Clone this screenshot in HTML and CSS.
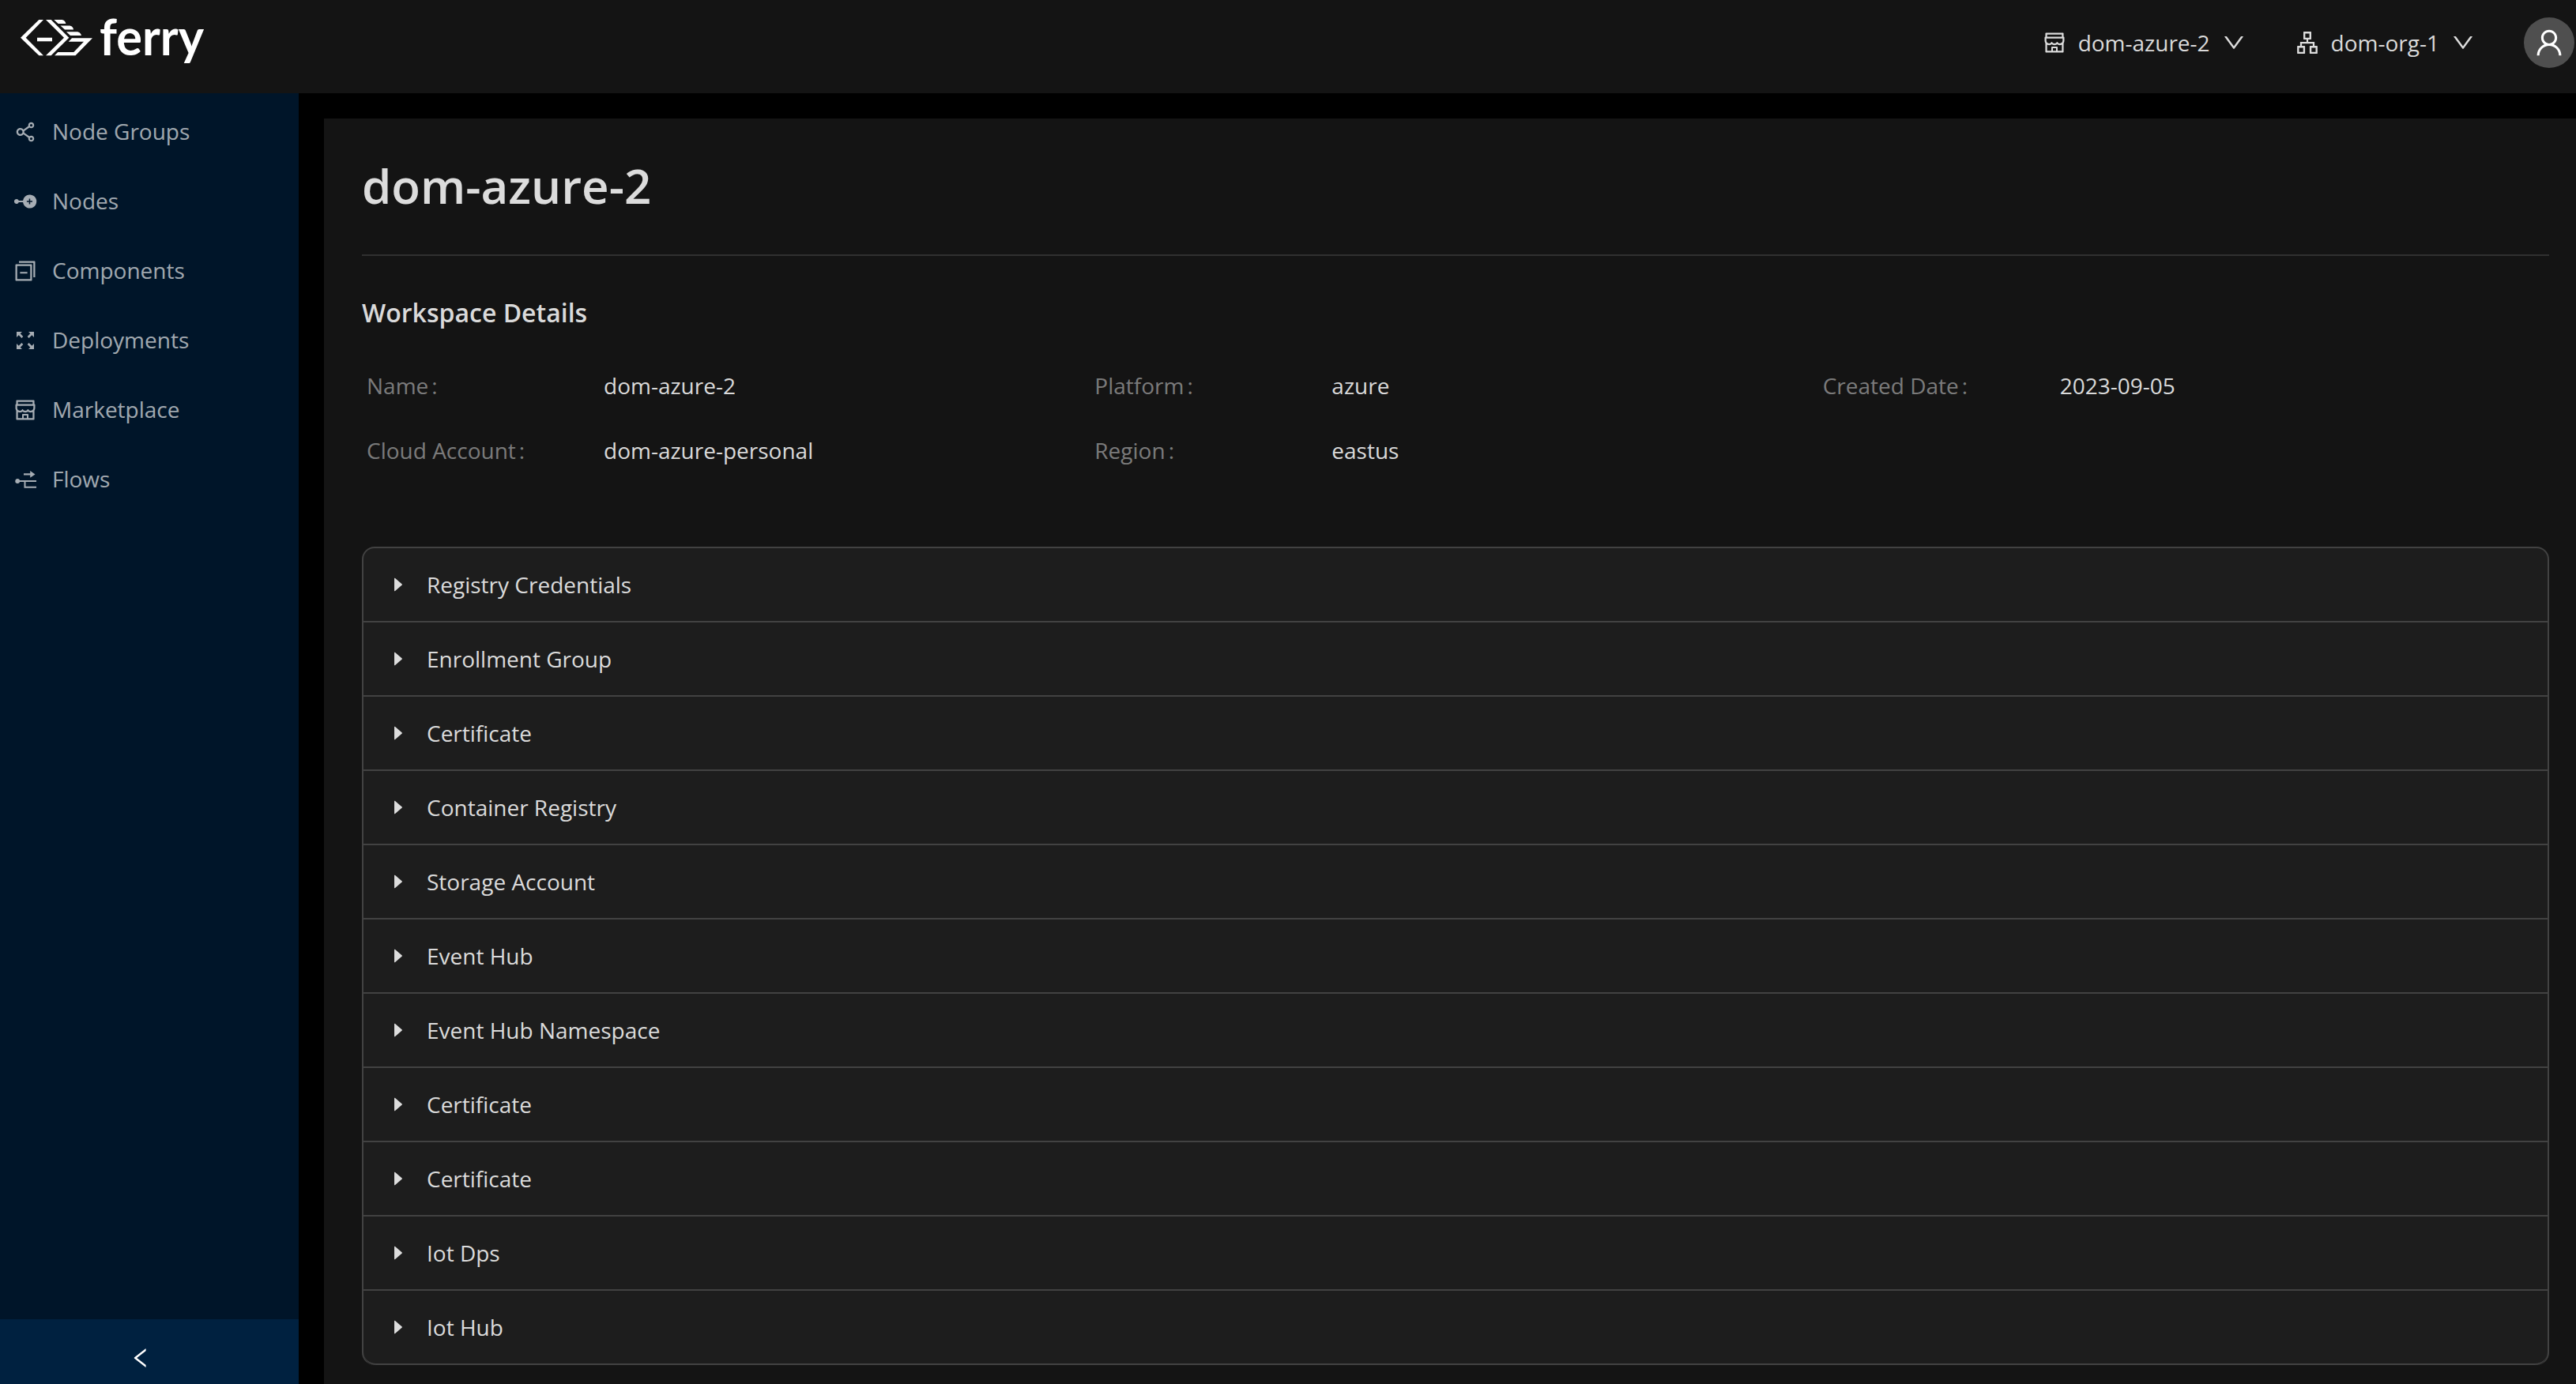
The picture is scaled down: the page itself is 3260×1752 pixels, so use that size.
FILE: index.html
```html
<!DOCTYPE html>
<html lang="en">
<head>
    <meta charset="UTF-8">
    <meta name="viewport" content="width=device-width, initial-scale=1.0">
    <title>ferry - dom-azure-2</title>
    <link rel="stylesheet" href="styles.css">
</head>
<body>
    <!-- shared icons -->
    <svg class="icon-defs" width="0" height="0">
        <symbol id="shop" viewBox="0 0 1024 1024">
            <path d="M882 272.1V144c0-17.7-14.3-32-32-32H174c-17.7 0-32 14.3-32 32v128.1c-16.7 1-30 14.9-30 31.9v131.7a177 177 0 0 0 14.4 70.4c4.3 10.2 9.6 19.8 15.6 28.9v345c0 17.6 14.3 32 32 32h676c17.7 0 32-14.3 32-32V535a175 175 0 0 0 15.6-28.9c9.5-22.3 14.4-46 14.4-70.4V304c0-17-13.3-30.9-30-31.9zM214 184h596v88H214v-88zm362 656.1H448V736h128v104.1zm234 0H640V704c0-17.7-14.3-32-32-32H416c-17.7 0-32 14.3-32 32v136.1H214V597.9c2.9 1.4 5.9 2.8 9 4 22.3 9.4 46 14.1 70.4 14.1s48-4.7 70.4-14.1c13.8-5.8 26.8-13.2 38.7-22.1.2-.1.4-.1.6 0a180.4 180.4 0 0 0 38.7 22.1c22.3 9.4 46 14.1 70.4 14.1 24.4 0 48-4.7 70.4-14.1 13.8-5.8 26.8-13.2 38.7-22.1.2-.1.4-.1.6 0a180.4 180.4 0 0 0 38.7 22.1c22.3 9.4 46 14.1 70.4 14.1 24.4 0 48-4.7 70.4-14.1 3-1.3 6-2.6 9-4v242.2zm30-404.4c0 59.8-49 108.3-109.3 108.3-40.8 0-76.4-22.1-95.2-54.9-2.9-5-8.1-8.1-13.9-8.1h-.6c-5.7 0-11 3.1-13.9 8.1A109.24 109.24 0 0 1 512 544c-40.7 0-76.2-22-95-54.7-3-5.1-8.4-8.3-14.3-8.3s-11.4 3.2-14.3 8.3a109.63 109.63 0 0 1-95.1 54.7C233 544 184 495.5 184 435.7v-91.2c0-.3.2-.5.5-.5h655c.3 0 .5.2.5.5v91.2z"/>
        </symbol>
        <symbol id="down" viewBox="0 0 1024 1024">
            <path d="M884 256h-75c-5.1 0-9.9 2.5-12.9 6.6L512 654.2 227.9 262.6c-3-4.1-7.8-6.6-12.9-6.6h-75c-6.5 0-10.3 7.4-6.5 12.7l352.6 486.1c12.8 17.6 39 17.6 51.7 0l352.6-486.1c3.9-5.3.1-12.7-6.4-12.7z"/>
        </symbol>
        <symbol id="caret" viewBox="0 0 1024 1024">
            <path d="M715.8 493.5L335 165.1c-14.2-12.2-35-1.2-35 18.5v656.8c0 19.7 20.8 30.7 35 18.5l380.8-328.4c10.9-9.4 10.9-27.6 0-37z"/>
        </symbol>
    </svg>

    <header class="header">
        <svg class="logo" width="250" height="80" viewBox="0 0 250 80">
            <path d="M49.3 25H55L32.7 47.7 55 70.3h-5.7L26 47.7z"/>
            <path d="M58 25h6.7l22.6 22.7-22.6 22.6H58L81 47.7z"/>
            <path d="M47 47.7h19v4.6H47z"/>
            <path d="M68.3 25h9.2c3.500 0 5.300 2.200 5.800 5h-9.600z"/>
            <path d="M76.5 32.5h10.8c3.600 0 5.300 2.300 5.700 5.100H82z"/>
            <path d="M84 40.2h13c3.600 0 5.400 2.300 6 4.800H89z"/>
            <path d="M91 48.2h26L95.5 70.3H69l4.300-4.300h20l12.700-13.300H86.700z"/>
            <text class="logo-text" x="126" y="70.3" textLength="132" lengthAdjust="spacingAndGlyphs">ferry</text>
        </svg>

        <div class="header-actions">
            <div class="dropdown">
                <svg class="icon"><use href="#shop"/></svg>
                <span>dom-azure-2</span>
                <svg class="icon"><use href="#down"/></svg>
            </div>
            <div class="dropdown">
                <svg class="icon" viewBox="0 0 1024 1024"><path d="M908 640H804V488c0-4.4-3.6-8-8-8H548v-96h108c8.8 0 16-7.2 16-16V80c0-8.8-7.2-16-16-16H368c-8.8 0-16 7.2-16 16v288c0 8.8 7.2 16 16 16h108v96H228c-4.4 0-8 3.6-8 8v152H116c-8.8 0-16 7.2-16 16v288c0 8.8 7.2 16 16 16h288c8.8 0 16-7.2 16-16V656c0-8.8-7.2-16-16-16H292v-88h440v88H620c-8.8 0-16 7.2-16 16v288c0 8.8 7.2 16 16 16h288c8.8 0 16-7.2 16-16V656c0-8.8-7.2-16-16-16zm-564 76v168H176V716h168zm84-408V140h168v168H428zm420 576H680V716h168v168z"/></svg>
                <span>dom-org-1</span>
                <svg class="icon"><use href="#down"/></svg>
            </div>
            <div class="avatar">
                <svg viewBox="0 0 1024 1024"><path d="M858.5 763.6a374 374 0 0 0-80.6-119.5 375.63 375.63 0 0 0-119.5-80.6c-.4-.2-.8-.3-1.2-.5C719.5 518 760 444.7 760 362c0-137-111-248-248-248S264 225 264 362c0 82.7 40.5 156 102.8 201.1-.4.2-.8.3-1.2.5-44.8 18.9-85 46-119.5 80.6a375.63 375.63 0 0 0-80.6 119.5A371.7 371.7 0 0 0 136 901.8a8 8 0 0 0 8 8.2h60c4.4 0 7.9-3.5 8-7.8 2-77.2 33-149.5 87.8-204.3 56.7-56.7 132-87.9 212.2-87.9s155.5 31.2 212.2 87.9C779 752.7 810 825 812 902.2c.1 4.4 3.6 7.8 8 7.8h60a8 8 0 0 0 8-8.2c-1-47.8-10.9-94.3-29.5-138.2zM512 534c-45.9 0-89.1-17.9-121.6-50.4S340 407.9 340 362c0-45.900 17.900-89.100 50.400-121.600S466.100 190 512 190s89.100 17.900 121.600 50.400S684 316.100 684 362c0 45.900-17.900 89.100-50.400 121.600S557.900 534 512 534z"/></svg>
            </div>
        </div>
    </header>

    <div class="layout">
        <aside class="sidebar">
            <nav class="menu">
                <a class="menu-item">
                    <svg class="icon" viewBox="0 0 1024 1024"><path d="M752 664c-28.5 0-54.8 10-75.4 26.7L469.4 540.8a160.68 160.68 0 0 0 0-57.6l207.2-149.9C697.2 350 723.5 360 752 360c66.2 0 120-53.8 120-120s-53.8-120-120-120-120 53.8-120 120c0 11.6 1.6 22.7 4.7 33.3L439.9 415.8C410.7 377.1 364.3 352 312 352c-88.4 0-160 71.6-160 160s71.6 160 160 160c52.3 0 98.7-25.1 127.9-63.8l196.8 142.5c-3.1 10.6-4.7 21.8-4.7 33.3 0 66.2 53.8 120 120 120s120-53.8 120-120-53.8-120-120-120zm0-476c28.7 0 52 23.3 52 52s-23.3 52-52 52-52-23.3-52-52 23.3-52 52-52zM312 600c-48.5 0-88-39.5-88-88s39.5-88 88-88 88 39.5 88 88-39.5 88-88 88zm440 236c-28.7 0-52-23.3-52-52s23.3-52 52-52 52 23.3 52 52-23.3 52-52 52z"/></svg>
                    <span>Node Groups</span>
                </a>
                <a class="menu-item">
                    <svg class="icon" viewBox="0 0 32 32"><path fill-rule="evenodd" d="M5 13a3 3 0 0 1 2.8 2h5.3a8.6 8.6 0 1 1 0 2H7.8A3 3 0 1 1 5 13zM20.7 12.5v2.8h-2.8v1.4h2.8v2.8h1.5v-2.8H25v-1.4h-2.8v-2.8z"/></svg>
                    <span>Nodes</span>
                </a>
                <a class="menu-item">
                    <svg class="icon" viewBox="0 0 1024 1024"><path d="M752 240H144c-17.7 0-32 14.3-32 32v608c0 17.7 14.3 32 32 32h608c17.7 0 32-14.3 32-32V272c0-17.7-14.3-32-32-32zm-40 600H184V312h528v528zm168-728H264c-4.400 0-8 3.600-8 8v56c0 4.400 3.600 8 8 8h576v576c0 4.400 3.600 8 8 8h56c4.400 0 8-3.600 8-8V144c0-17.700-14.300-32-32-32zM300 550h296v64H300z"/></svg>
                    <span>Components</span>
                </a>
                <a class="menu-item">
                    <svg class="icon" viewBox="0 0 32 32">
                        <path d="M5 5h7l-2.3 2.3 3.6 3.7-1.9 1.9-3.7-3.6L5 12z"/>
                        <path d="M27 5h-7l2.3 2.3-3.6 3.7 1.9 1.9 3.7-3.6L27 12z"/>
                        <path d="M5 27h7l-2.3-2.3 3.6-3.7-1.9-1.9-3.7 3.6L5 20z"/>
                        <path d="M27 27h-7l2.3-2.3-3.6-3.7 1.9-1.9 3.7 3.6L27 20z"/>
                    </svg>
                    <span>Deployments</span>
                </a>
                <a class="menu-item">
                    <svg class="icon"><use href="#shop"/></svg>
                    <span>Marketplace</span>
                </a>
                <a class="menu-item">
                    <svg class="icon" viewBox="0 0 32 32"><path d="M14 8.200h8.200V5l6.300 4.400-6.300 4.400v-3.200H14zM6.300 15a3 3 0 0 1 2.800 2H30v2H16.500v5.700H30v2H14.500V19H9.100A3 3 0 1 1 6.300 15z"/></svg>
                    <span>Flows</span>
                </a>
            </nav>
            <div class="sidebar-trigger">
                <svg class="icon" viewBox="0 0 1024 1024"><path d="M724 218.3V141c0-6.7-7.7-10.4-12.9-6.3L260.3 486.8a31.86 31.86 0 0 0 0 50.3l450.8 352.1c5.3 4.1 12.9.4 12.9-6.3v-77.3c0-4.9-2.3-9.6-6.1-12.6l-360-281 360-281.1c3.8-3 6.1-7.7 6.1-12.6z"/></svg>
            </div>
        </aside>

        <main class="content">
            <h1>dom-azure-2</h1>
            <h2>Workspace Details</h2>

            <div class="details">
                <div class="detail"><span class="label">Name</span><span>dom-azure-2</span></div>
                <div class="detail"><span class="label">Platform</span><span>azure</span></div>
                <div class="detail"><span class="label">Created Date</span><span>2023-09-05</span></div>
                <div class="detail"><span class="label">Cloud Account</span><span>dom-azure-personal</span></div>
                <div class="detail"><span class="label">Region</span><span>eastus</span></div>
            </div>

            <div class="collapse">
                <div class="panel"><svg class="caret"><use href="#caret"/></svg><span>Registry Credentials</span></div>
                <div class="panel"><svg class="caret"><use href="#caret"/></svg><span>Enrollment Group</span></div>
                <div class="panel"><svg class="caret"><use href="#caret"/></svg><span>Certificate</span></div>
                <div class="panel"><svg class="caret"><use href="#caret"/></svg><span>Container Registry</span></div>
                <div class="panel"><svg class="caret"><use href="#caret"/></svg><span>Storage Account</span></div>
                <div class="panel"><svg class="caret"><use href="#caret"/></svg><span>Event Hub</span></div>
                <div class="panel"><svg class="caret"><use href="#caret"/></svg><span>Event Hub Namespace</span></div>
                <div class="panel"><svg class="caret"><use href="#caret"/></svg><span>Certificate</span></div>
                <div class="panel"><svg class="caret"><use href="#caret"/></svg><span>Certificate</span></div>
                <div class="panel"><svg class="caret"><use href="#caret"/></svg><span>Iot Dps</span></div>
                <div class="panel"><svg class="caret"><use href="#caret"/></svg><span>Iot Hub</span></div>
            </div>
        </main>
    </div>
</body>
</html>
```
FILE: styles.css
```css
* {
    box-sizing: border-box;
}
body {
    margin: 0;
    height: 100vh;
    overflow: hidden;
    display: flex;
    flex-direction: column;
    background-color: #000;
    color: rgba(255, 255, 255, 0.85);
    font-family: "Open Sans", "Noto Sans", sans-serif;
    font-size: 28px;
    line-height: 44px;
}
.icon-defs {
    display: none;
}
svg {
    fill: currentColor;
    flex: none;
}
.icon {
    width: 32px;
    height: 32px;
}

/* header */
.header {
    flex: none;
    height: 118px;
    display: flex;
    justify-content: space-between;
    background-color: #141414;
}
.logo {
    color: #fff;
    overflow: visible;
}
.logo-text {
    font-family: Lato, sans-serif;
    font-size: 64px;
    font-weight: 700;
}
.header-actions {
    height: 108px;
    display: flex;
    align-items: center;
    padding-right: 2px;
}
.dropdown {
    display: flex;
    align-items: center;
    margin-right: 61px;
}
.dropdown span {
    margin: 0 14px;
}
.avatar {
    width: 64px;
    height: 64px;
    display: flex;
    align-items: center;
    justify-content: center;
    border-radius: 50%;
    background-color: #4f4f4f;
    color: #fff;
}
.avatar svg {
    width: 42px;
    height: 42px;
}

.layout {
    flex: 1;
    min-height: 0;
    display: flex;
}

/* sidebar */
.sidebar {
    width: 378px;
    flex: none;
    display: flex;
    flex-direction: column;
    justify-content: space-between;
    background-color: #001529;
}
.menu {
    display: flex;
    flex-direction: column;
    gap: 8px;
    padding-top: 9px;
}
.menu-item {
    height: 80px;
    display: flex;
    align-items: center;
    padding-left: 16px;
    color: rgba(255, 255, 255, 0.65);
}
.menu-item span {
    margin-left: 18px;
    padding-bottom: 2px;
}
.sidebar-trigger {
    height: 82px;
    display: flex;
    justify-content: center;
    padding: 33px 22px 0 0;
    background-color: #002140;
    color: #fff;
}

/* content */
.content {
    flex: 1;
    margin: 32px 0 0 32px;
    padding: 48px 34px 0 48px;
    background-color: #141414;
}
h1 {
    margin: 0;
    height: 126px;
    border-bottom: 2px solid #303030;
    font-size: 60px;
    font-weight: 600;
    line-height: 75px;
}
h2 {
    margin: 48px 0 46px;
    font-size: 32px;
    font-weight: 600;
    line-height: 48px;
}
.details {
    display: grid;
    grid-template-columns: repeat(3, 1fr);
    row-gap: 38px;
    margin: 0 -2px 100px 6px;
}
.detail {
    display: flex;
}
.label {
    width: 300px;
    color: rgba(255, 255, 255, 0.45);
}
.label::after {
    content: ":";
    margin-left: 4px;
}
.collapse {
    border: 2px solid #424242;
    border-bottom: none;
    border-radius: 16px;
    background-color: #1d1d1d;
}
.panel {
    height: 94px;
    display: flex;
    align-items: center;
    padding: 0 32px;
    border-bottom: 2px solid #424242;
}
.panel:last-child {
    border-radius: 0 0 16px 16px;
}
.caret {
    width: 24px;
    height: 24px;
    margin-right: 24px;
}
```
